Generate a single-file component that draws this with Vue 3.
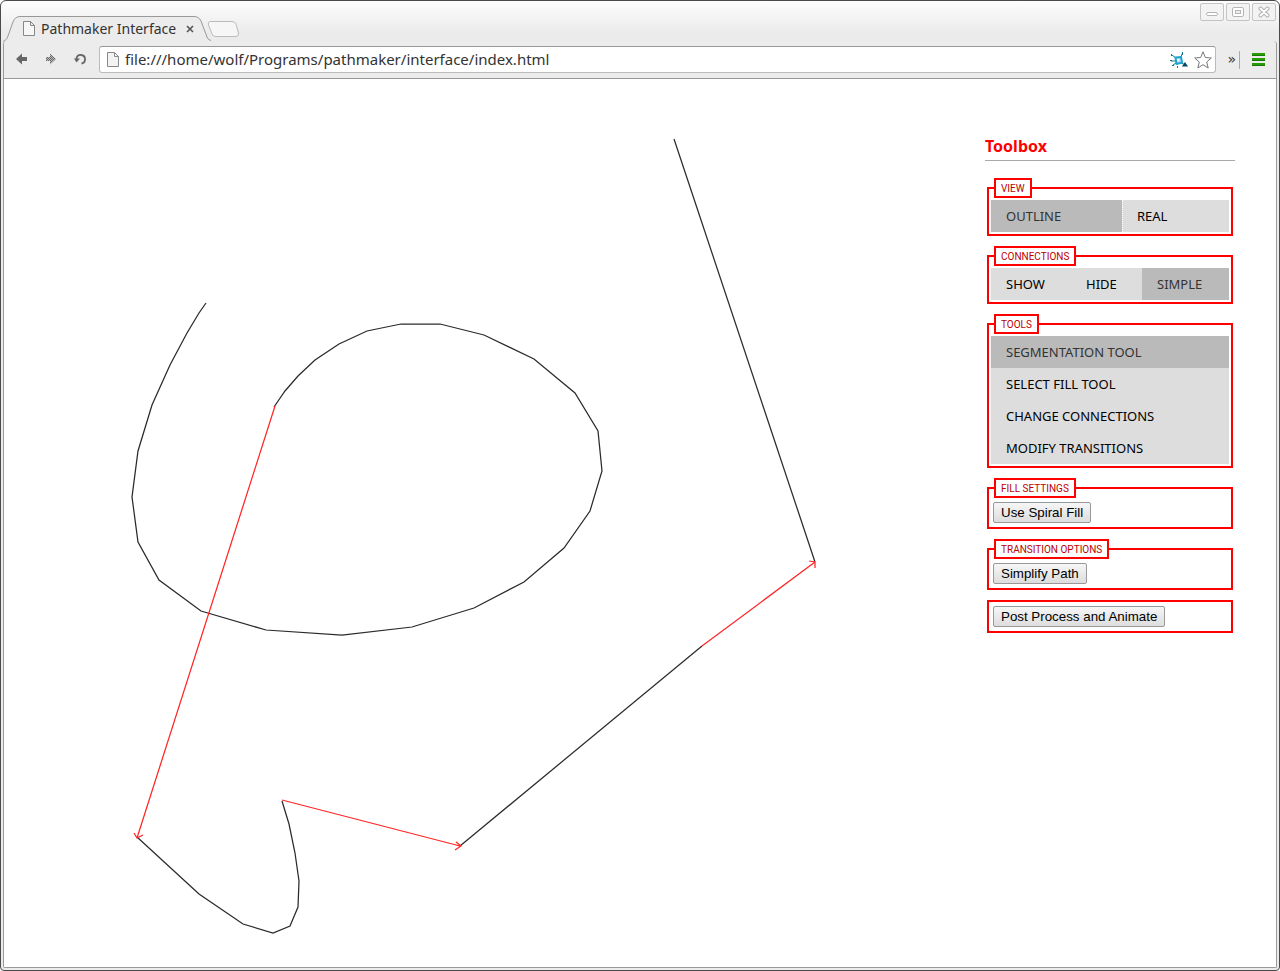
<script setup>
import { ref } from 'vue'

const url = ref('file:///home/wolf/Programs/pathmaker/interface/index.html')
const view = ref('Outline')
const connections = ref('Simple')
const tool = ref('Segmentation Tool')

const views = [
  { name: 'Outline', share: 116 },
  { name: 'Real', share: 92 },
]
const connectionModes = [
  { name: 'Show', share: 65 },
  { name: 'Hide', share: 56 },
  { name: 'Simple', share: 72 },
]
const tools = ['Segmentation Tool', 'Select Fill Tool', 'Change Connections', 'Modify Transitions']

const segments = [
  '202,224 195,234 183,254 166,286 148,326 134,372 128,418 134,463 155,501 197,532 262,551 338,556 408,548 470,529 520,503 560,469 586,432 598,392 594,352 571,314 530,280 480,256 436,245 397,245 363,252 335,265 311,281 294,297 281,312 270,328',
  '133,758 195,815 239,845 269,854 286,847 294,828 295,802 291,774 285,745 278,722',
  '456,767 698,567',
  '811,483 670,60',
]
const links = [
  'M271 327 133 759M130 754 133 759 139 756',
  'M278 721 456 767M452 763 457 767 451 771',
  'M698 567 811 483M805 482 811 483 811 489',
]
</script>

<template>
  <div class="window">
    <header class="titlebar">
      <div class="tabs">
        <div class="tab">
          <svg class="tab-shape" width="208" height="26" viewBox="0 0 208 26" aria-hidden="true">
            <path d="M0 26C3 24 4 23 5 20L10 6Q12 .5 17 .5H191Q196 .5 198 5L204 21Q205 24 208 25.500V26Z" fill="#ececec" />
            <path d="M0 25.500C3 24 4 23 5 20L10 6Q12 .5 17 .5H191Q196 .5 198 5L204 21Q205 24 208 24.500" fill="none" stroke="#999" />
          </svg>
          <svg class="doc" width="12" height="15" viewBox="0 0 12 15" aria-hidden="true">
            <path d="M1 .5H7.500L11.500 4.500V14.500H.5V.5ZM7.500 .5V4.500H11.500" fill="#f7f7f7" stroke="#888" />
          </svg>
          <span class="tab-title">Pathmaker Interface</span>
          <button class="plain tab-close" aria-label="Close tab">
            <svg width="8" height="8" viewBox="0 0 8 8"><path d="M1 1 7 7M7 1 1 7" stroke="#555" stroke-width="1.600" /></svg>
          </button>
        </div>
        <button class="plain new-tab" aria-label="New tab">
          <svg width="34" height="17" viewBox="0 0 34 17">
            <path d="M3 .5H25Q28 .5 29 3L31.500 12Q32 15.500 29 15.500H9Q6 15.500 5 13L1.500 4Q.5 .5 3 .5Z" fill="#f6f6f6" stroke="#bbb" />
          </svg>
        </button>
      </div>
      <div class="controls">
        <button class="control" aria-label="Minimize">
          <svg width="12" height="12" viewBox="0 0 12 12"><rect x=".5" y="6.500" width="11" height="3" rx="1.500" fill="#fff" stroke="#b5b5b5" /></svg>
        </button>
        <button class="control" aria-label="Maximize">
          <svg width="12" height="12" viewBox="0 0 12 12"><rect x=".5" y="1.500" width="11" height="9" rx="1.500" fill="#fff" stroke="#b5b5b5" /><rect x="3.500" y="4.500" width="5" height="3" fill="#eee" stroke="#b5b5b5" /></svg>
        </button>
        <button class="control" aria-label="Close">
          <svg width="12" height="12" viewBox="0 0 12 12"><path d="M2.500 2.500 9.500 9.500M9.500 2.500 2.500 9.500" stroke="#b0b0b0" stroke-width="4" stroke-linecap="round" /><path d="M2.500 2.500 9.500 9.500M9.500 2.500 2.500 9.500" stroke="#fff" stroke-width="2" stroke-linecap="round" /></svg>
        </button>
      </div>
    </header>

    <div class="frame">
      <nav class="toolbar" aria-label="Browser">
        <div class="history">
          <button class="plain" aria-label="Back">
            <svg width="12" height="12" viewBox="0 0 12 12"><path d="M0 6 6 .5V4H11V8H6V11.500Z" fill="#666" /></svg>
          </button>
          <button class="plain" aria-label="Forward">
            <svg width="12" height="12" viewBox="0 0 12 12">
              <defs><pattern id="dither" width="2" height="2" patternUnits="userSpaceOnUse"><rect width="2" height="2" fill="#bbb" /><rect width="1" height="1" fill="#666" /><rect x="1" y="1" width="1" height="1" fill="#666" /></pattern></defs>
              <path d="M11 6 5 .5V4H1V8H5V11.500Z" fill="url(#dither)" />
            </svg>
          </button>
          <button class="plain" aria-label="Reload">
            <svg width="14" height="12" viewBox="0 0 14 12"><path d="M2.500 6.500V5.500A4.300 4.300 0 1 1 7.500 10.500" fill="none" stroke="#666" stroke-width="1.800" /><path d="M0 5.500H6L2.500 9.500Z" fill="#666" /></svg>
          </button>
        </div>
        <div class="omnibox">
          <svg width="12" height="15" viewBox="0 0 12 15" aria-hidden="true">
            <path d="M1 .5H7.500L11.500 4.500V14.500H.5V.5ZM7.500 .5V4.500H11.500" fill="#f3f3f3" stroke="#888" />
          </svg>
          <input v-model="url" class="address" type="text" aria-label="Address" spellcheck="false">
          <button class="plain" aria-label="Extension">
            <svg width="18" height="16" viewBox="0 0 18 16">
              <path d="M2 3 6 6M11 5 12.500 1M1 9 5 9M3 13 6 11M11 11 16 13" stroke="#178" stroke-width="1" />
              <path d="M5.500 5.500 11 5 12 10.500 6.500 12Z" fill="#cdf" stroke="#18a6cf" stroke-width="2" stroke-linejoin="round" />
              <path d="M8 7V9" stroke="#fff" stroke-width="2" />
              <path d="M1 2h1v2H1zM12 0h1v3h-1zM0 8h2v1H0zM2 13h2v1H2zM7 14h1v2H7z" fill="#178" /><path d="M12 14.500 15 10 18 14.500Z" fill="#046" />
            </svg>
          </button>
          <button class="plain" aria-label="Bookmark this page">
            <svg width="18" height="18" viewBox="0 0 18 18"><path d="M9 .8 11.300 6.500 17.300 7 12.700 11 14.200 17 9 13.700 3.800 17 5.300 11 .7 7 6.700 6.500Z" fill="#fff" stroke="#777" stroke-linejoin="round" /></svg>
          </button>
        </div>
        <button class="plain more" aria-label="More extensions">»</button>
        <span class="rule"></span>
        <button class="plain menu" aria-label="Menu">
          <svg width="13" height="13" viewBox="0 0 13 13"><path d="M0 0H13V3H0ZM0 5H13V8H0ZM0 10H13V13H0Z" fill="#2a9a08" /><path d="M0 2.500H13M0 7.500H13M0 12.500H13" stroke="#1a7a08" /></svg>
        </button>
      </nav>

      <main class="page">
        <svg class="canvas" role="img" aria-label="Path outline">
          <polyline v-for="points in segments" :key="points" :points="points" class="segment" />
          <path v-for="d in links" :key="d" :d="d" class="link" />
        </svg>
        <aside class="toolbox">
          <h1>Toolbox</h1>
          <fieldset>
            <legend>View</legend>
            <div class="row split">
              <button v-for="v in views" :key="v.name" class="option" :class="{ active: view === v.name }" :style="{ flexGrow: v.share }" :aria-pressed="view === v.name" @click="view = v.name">{{ v.name }}</button>
            </div>
          </fieldset>
          <fieldset>
            <legend>Connections</legend>
            <div class="row">
              <button v-for="c in connectionModes" :key="c.name" class="option" :class="{ active: connections === c.name }" :style="{ flexGrow: c.share }" :aria-pressed="connections === c.name" @click="connections = c.name">{{ c.name }}</button>
            </div>
          </fieldset>
          <fieldset>
            <legend>Tools</legend>
            <div class="column">
              <button v-for="t in tools" :key="t" class="option" :class="{ active: tool === t }" :aria-pressed="tool === t" @click="tool = t">{{ t }}</button>
            </div>
          </fieldset>
          <fieldset>
            <legend>Fill Settings</legend>
            <button class="push">Use Spiral Fill</button>
          </fieldset>
          <fieldset>
            <legend>Transition Options</legend>
            <button class="push">Simplify Path</button>
          </fieldset>
          <fieldset>
            <button class="push">Post Process and Animate</button>
          </fieldset>
        </aside>
      </main>
    </div>
  </div>
</template>

<style>
body {
  background: #fff;
}
</style>

<style scoped>
* {
  box-sizing: border-box;
}

.window {
  display: flex;
  flex-direction: column;
  min-height: 100vh;
  padding: 0 2px 2px;
  border: 1px solid #4a4a4a;
  border-radius: 6px 6px 4px 4px;
  background: linear-gradient(#fdfdfd, #ebebeb 32px);
  font-family: "Noto Sans", sans-serif;
}

.plain {
  display: flex;
  padding: 0;
  border: 0;
  background: none;
  color: #333;
}

.titlebar {
  display: flex;
  justify-content: space-between;
  height: 40px;
}

.tabs {
  display: flex;
  align-items: flex-end;
}

.tab {
  position: relative;
  display: flex;
  align-items: center;
  width: 204px;
  height: 25px;
  padding: 0 12px 0 20px;
}

.tab-shape {
  position: absolute;
  left: 0;
  top: 0;
}

.doc,
.tab-title,
.tab-close {
  position: relative;
}

.tab-title {
  flex: 1;
  margin-left: 6px;
  color: #333;
  font-size: 14px;
  line-height: 20px;
  white-space: nowrap;
}

.tab-close {
  margin-right: 1px;
}

.new-tab {
  margin-bottom: 3px;
}

.controls {
  display: flex;
  gap: 2px;
  padding: 2px 1px 0 0;
}

.control {
  display: flex;
  align-items: center;
  justify-content: center;
  width: 24px;
  height: 18px;
  padding: 0;
  border: 1px solid #c4c4c4;
  border-radius: 2px;
  background: #f3f3f3;
}

.frame {
  display: flex;
  flex: 1;
  flex-direction: column;
  border: 1px solid #999;
  border-top: 0;
  border-radius: 4px 4px 2px 2px;
}

.toolbar {
  display: flex;
  align-items: center;
  height: 38px;
  padding: 0 11px 0 12px;
  border-bottom: 1px solid #999;
  border-radius: 4px 4px 0 0;
  background: #ececec;
}

.history {
  display: flex;
  gap: 17px;
  width: 83px;
  margin-bottom: 2px;
}

.omnibox {
  display: flex;
  flex: 1;
  align-items: center;
  gap: 6px;
  height: 27px;
  padding: 0 3px 0 7px;
  border: 1px solid #bbb;
  border-top-color: #999;
  border-radius: 3px;
  background: #fff;
}

.address {
  flex: 1;
  min-width: 0;
  padding: 0 0 2px;
  border: 0;
  outline: 0;
  background: none;
  color: #333;
  font: 15px/22px "Noto Sans", sans-serif;
}

.more {
  margin: 0 0 2px 11px;
  font: 14px/20px "DejaVu Sans", sans-serif;
}

.rule {
  width: 1px;
  height: 18px;
  margin: 0 12px 0 3px;
  background: #aaa;
}

.page {
  display: flex;
  flex: 1;
  background: #fff;
}

.canvas {
  flex: 1;
  min-width: 0;
  height: auto;
}

.segment {
  fill: none;
  stroke: #2a2a2a;
  stroke-width: 1.25;
}

.link {
  fill: none;
  stroke: #ff2626;
  stroke-width: 1.25;
}

.toolbox {
  width: 250px;
  margin: 55px 41px 40px 0;
  font-family: "Noto Sans", sans-serif;
}

h1 {
  margin: 0 0 17px;
  padding-bottom: 2px;
  border-bottom: 1px solid #aaa;
  color: #f00;
  font-size: 16px;
  line-height: 24px;
}

fieldset {
  min-width: 0;
  margin: 0 2px 10px;
  padding: 2px;
  border: 2px solid #f00;
}

legend {
  height: 20px;
  margin-left: 3px;
  padding: 0 5px;
  border: 2px solid #f00;
  background: #fff;
  color: #b00;
  font: 10px/18px Roboto, sans-serif;
  text-transform: uppercase;
}

.row {
  display: flex;
}

.column {
  display: flex;
  flex-direction: column;
}

.option {
  flex-shrink: 0;
  height: 32px;
  padding: 0 0 0 15px;
  border: 0;
  background: #ddd;
  color: #000;
  font: 13px/32px "Noto Sans", sans-serif;
  text-align: left;
  text-transform: uppercase;
}

.row .option {
  flex-basis: 0;
}

.split .option:last-child {
  padding-left: 14px;
  border-left: 1px dotted #fff;
}

.option.active {
  background: #bababa;
  color: #333;
}

.push {
  display: block;
  height: 21px;
  margin: 2px;
  padding: 0 7px;
  border: 1px solid #999;
  border-radius: 2px;
  background: linear-gradient(#f6f6f6, #ddd);
  color: #000;
  font-family: "Liberation Sans", sans-serif;
  line-height: 19px;
}
</style>
